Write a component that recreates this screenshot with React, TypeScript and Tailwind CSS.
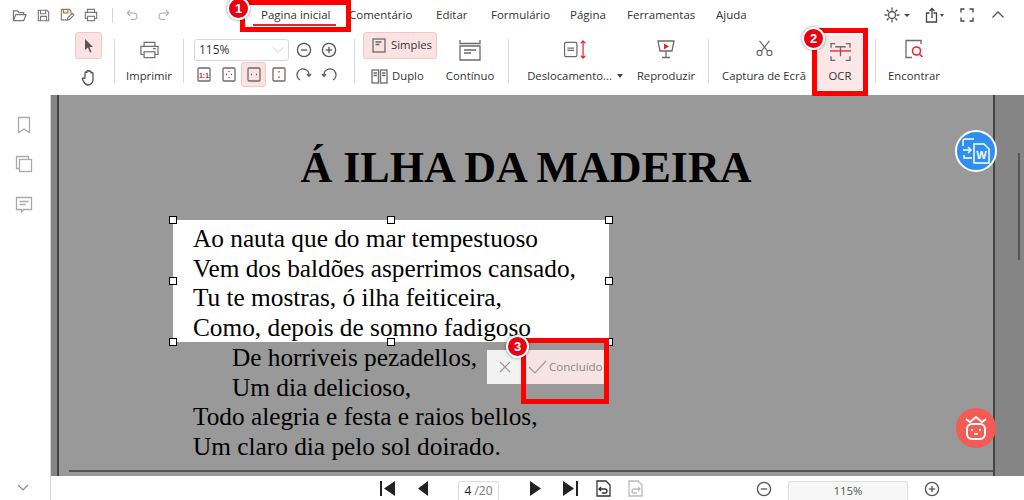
import React from "react";

const S = ({ w = 20, h = 20, vw, vh, children, className = "" }: { w?: number; h?: number; vw?: number; vh?: number; children: React.ReactNode; className?: string }) => (
  <svg width={w} height={h} viewBox={`0 0 ${vw ?? w} ${vh ?? h}`} fill="none" stroke="#6b6b6b" strokeWidth={1.3} className={"shrink-0 " + className}>{children}</svg>
);

const Sep = ({ h = "h-[44px]" }: { h?: string }) => <div className={`w-px ${h} bg-[#d9d9d9] shrink-0`} />;

const Badge = ({ n, className }: { n: number; className: string }) => (
  <div className={`absolute w-[23px] h-[23px] rounded-full bg-[#e60012] border-2 border-white text-white text-[13px] font-bold flex items-center justify-center shadow-[0_0_3px_rgba(0,0,0,0.5)] font-['Liberation_Sans',sans-serif] ${className}`}>{n}</div>
);

const RedBox = ({ className }: { className: string }) => <div className={`absolute border-[5px] border-[#ff0000] pointer-events-none ${className}`} />;

const Tab = ({ w, children, active }: { w: string; children: React.ReactNode; active?: boolean }) => (
  <div className={`${w} h-[30px] shrink-0 flex items-center`}>
    <span className={"-mt-[1px] " + (active ? "relative" : "")}>{children}{active && <span className="absolute left-[-8px] right-[-6px] top-[18px] h-[2px] bg-[#e8262d]" />}</span>
  </div>
);

const BigTool = ({ w, icon, label, extra }: { w: string; icon: React.ReactNode; label: string; extra?: React.ReactNode }) => (
  <div className={`${w} shrink-0 h-[65px] flex flex-col items-center text-[11.3px]`}>
    <div className="h-[37px] flex items-end justify-center pb-[8px]">{icon}</div>
    <div className="h-[20px] -mt-[1px] flex items-center whitespace-nowrap">{label}{extra}</div>
  </div>
);

const Mini = ({ active, children }: { active?: boolean; children: React.ReactNode }) => (
  <div className={`w-[25px] h-[25px] shrink-0 flex items-center justify-center rounded-[3px] ${active ? "bg-[#fbe3e3] border border-[#f7c5c5]" : ""}`}>{children}</div>
);

const Handle = ({ className }: { className: string }) => <div className={`absolute w-[8px] h-[8px] bg-white border border-black ${className}`} />;

const CirclePM = ({ plus }: { plus?: boolean }) => (
  <S w={16} h={16}><circle cx="8" cy="8" r="6.6" stroke="#555" /><path d="M4.8 8h6.4" stroke="#555" />{plus && <path d="M8 4.8v6.4" stroke="#555" />}</S>
);

const MiniPage = ({ children }: { children?: React.ReactNode }) => (
  <S w={14} h={15}><rect x="1" y="1" width="12" height="13" rx="1" />{children}</S>
);

export default function App() {
  return (
    <div className="w-[1024px] h-[500px] overflow-hidden relative bg-white flex flex-col text-[#333] text-[11.5px] font-['Open_Sans','Noto_Sans',sans-serif]">
      {/* title row */}
      <div className="h-[30px] flex items-center shrink-0">
        <div className="w-[261px] shrink-0 flex items-center pl-[12px]">
          <div className="w-[25px]"><S w={15} h={14} vw={16} vh={15}><path d="M1.5 13.5V3h4.500l1.500 2h5v2M1.500 13.500l2.500-6.500h11l-2.500 6.500z" stroke="#777" /></S></div>
          <div className="w-[23px]"><S w={13} h={13} vw={15} vh={15}><path d="M1.500 1.500h10l2 2v10h-12z" stroke="#777" /><path d="M4 1.500v4h6v-4M4 13.500v-5h7v5" stroke="#777" /></S></div>
          <div className="w-[24px]"><S w={15} h={14} vw={17} vh={16}><path d="M1.500 1.500h9l2 2v3M1.500 1.500v12h6" stroke="#a0744a" /><path d="M4 1.500v4h5v-4" stroke="#a0744a" /><path d="M8 14l1-3 5-5 2 2-5 5z" stroke="#777" /></S></div>
          <div className="w-[28px]"><S w={14} h={14} vw={16} vh={16}><path d="M4 5V1.500h8V5M4 12H1.500V5h13v7H12" stroke="#777" /><rect x="4" y="9.500" width="8" height="5" stroke="#777" /></S></div>
          <div className="w-[14px]"><div className="w-px h-[15px] bg-[#d5d5d5]" /></div>
          <div className="w-[31px]"><S w={13} h={14} vw={16} vh={16}><path d="M5 2L1.800 5.500 5 9" stroke="#aaa" /><path d="M2 5.500h7.500a4 4 0 0 1 0 8H6" stroke="#aaa" /></S></div>
          <div><S w={13} h={14} vw={16} vh={16}><path d="M11 2l3.200 3.500L11 9" stroke="#aaa" /><path d="M14 5.500H6.500a4 4 0 0 0 0 8H10" stroke="#aaa" /></S></div>
        </div>
        <Tab w="w-[88px]" active><span className="relative z-10">Pagina inicial</span></Tab>
        <Tab w="w-[87px]">Comentário</Tab>
        <Tab w="w-[55px]">Editar</Tab>
        <Tab w="w-[79px]">Formulário</Tab>
        <Tab w="w-[57px]">Página</Tab>
        <Tab w="w-[89px]">Ferramentas</Tab>
        <Tab w="w-[168px]">Ajuda</Tab>
        <div className="flex items-center">
          <div className="w-[41px] flex items-center gap-[4px]"><S w={16} h={16}><circle cx="8" cy="8" r="3.500" stroke="#555" /><path d="M8 0.500v3M8 12.500v3M0.500 8h3M12.500 8h3M2.700 2.700l2 2M11.300 11.300l2 2M13.300 2.700l-2 2M4.700 11.300l-2 2" stroke="#555" /></S><div className="w-0 h-0 border-x-[3px] border-x-transparent border-t-[3px] border-t-[#444]" /></div>
          <div className="w-[35px] flex items-center gap-[1px]"><S w={14} h={16}><path d="M4.500 6H1.500v9h10V6H8.500M7 11V1.500M4.500 4L7 1.500 9.500 4" stroke="#444" /></S><div className="w-0 h-0 border-x-[2.500px] border-x-transparent border-t-[3px] border-t-[#444]" /></div>
          <div className="w-[31px]"><S w={14} h={14}><path d="M1 4.500V1h3.500M9.500 1H13v3.500M13 9.500V13H9.500M4.500 13H1V9.500" stroke="#444" /></S></div>
          <div><S w={14} h={14}><path d="M1.500 9.500L7 4l5.500 5.500" stroke="#555" /></S></div>
        </div>
      </div>

      {/* ribbon */}
      <div className="h-[65px] shrink-0 flex items-start relative">
        <div className="w-[75px] shrink-0" />
        <div className="w-[27px] shrink-0 flex flex-col mt-[2px]">
          <div className="w-[27px] h-[27px] bg-[#fbe3e3] border border-[#f7c5c5] rounded-[3px] flex items-center justify-center">
            <svg width="12" height="16" viewBox="0 0 12 16"><path d="M2 1l8 8H6.500l2 5-1.500.6-2-5L2 12z" fill="#555" /></svg>
          </div>
          <div className="h-[36px] flex items-center justify-center pl-[1px]"><S w={16} h={17}><path d="M4 9V4a1 1 0 0 1 2 0V2.500a1 1 0 0 1 2 0V3a1 1 0 0 1 2 0v1.500a1 1 0 0 1 2 0V11a5 5 0 0 1-5 5c-3 0-3.500-2-5.500-5.500-.7-1.200.8-2 1.500-1z" stroke="#555" /></S></div>
        </div>
        <div className="w-[12px] shrink-0" />
        <div className="mt-[9px]"><Sep /></div>
        <BigTool w="w-[68px]" icon={<S w={21} h={18} vw={22} vh={20}><path d="M5 6V1.500h12V6M5 15H1.500V6h19v9H17" /><rect x="5" y="12" width="12" height="6.500" /><path d="M15 8.500h3" stroke="#e8262d" /></S>} label="Imprimir" />
        <div className="mt-[9px]"><Sep /></div>
        <div className="w-[170px] shrink-0 flex flex-col pl-[10px]">
          <div className="h-[35px] flex items-center pt-[5px]">
            <div className="w-[95px] h-[22px] border border-[#d9d9d9] rounded-[3px] flex items-center justify-between px-[4px] shrink-0 text-[12px]">
              <span>115%</span>
              <svg width="12" height="8" viewBox="0 0 12 8" fill="none" stroke="#ccc" strokeWidth="1"><path d="M1 1.500l5 5 5-5" /></svg>
            </div>
            <div className="w-[33px] pl-[7px]"><CirclePM /></div>
            <div className="-ml-[1px]"><CirclePM plus /></div>
          </div>
          <div className="flex items-center -ml-[3px] mt-[-3px] h-[25px]">
            <Mini><MiniPage><text x="7" y="10.500" fontSize="7" fill="#e8262d" stroke="none" textAnchor="middle" fontWeight="bold" fontFamily="Liberation Sans">1:1</text></MiniPage></Mini>
            <Mini><MiniPage><path d="M7 4v1M7 10v1M4 7.500h1M9 7.500h1" stroke="#e8262d" /></MiniPage></Mini>
            <Mini active><MiniPage><path d="M4 7.500h1M9 7.500h1" stroke="#e8262d" /></MiniPage></Mini>
            <Mini><MiniPage><path d="M7 4v1.500M7 9.500V11" stroke="#e8262d" /></MiniPage></Mini>
            <Mini><S w={16} h={15}><path d="M4 13A6 6 0 1 1 13 8.500" stroke="#555" /><path d="M11 7l2 2.200L15 7" stroke="#555" /></S></Mini>
            <Mini><S w={16} h={15}><path d="M12 13A6 6 0 1 0 3 8.500" stroke="#555" /><path d="M1 7l2 2.200L5 7" stroke="#555" /></S></Mini>
          </div>
        </div>
        <div className="mt-[9px]"><Sep /></div>
        <div className="w-[79px] shrink-0 pl-[8px] flex flex-col text-[11.3px]">
          <div className="w-[74px] h-[27px] mt-[2px] bg-[#fbe3e3] border border-[#f7c5c5] rounded-[3px] flex items-center gap-[5px] pl-[8px] shrink-0">
            <S w={14} h={15}><rect x="1" y="1" width="12" height="13" /><path d="M3.500 4h6M3.500 6.500h4" /></S><span>Simples</span>
          </div>
          <div className="h-[34px] flex items-center gap-[4px] pl-[8px]">
            <S w={17} h={15}><rect x="1" y="1" width="6.500" height="13" /><rect x="9.500" y="1" width="6.500" height="13" /><path d="M2.500 4h3.500M2.500 6.500h3.500M11 4h3.500M11 6.500h3.500" /></S><span>Duplo</span>
          </div>
        </div>
        <BigTool w="w-[72px]" icon={<S w={22} h={22} className="-mb-[2px]"><path d="M1 1v3.500h20V1M1 21V7h20v14z" /><path d="M5 11h12M5 14h7" /></S>} label="Contínuo" />
        <div className="w-[2px] shrink-0" />
        <div className="mt-[9px]"><Sep /></div>
        <BigTool w="w-[132px]" icon={<S w={24} h={19} vw={24} vh={20}><rect x="1" y="2.500" width="13" height="15" rx="1.500" /><path d="M4 8.500h7M4 11h7" /><path d="M20.500 1v18M18 3.500l2.500-2.500 2.500 2.500M18 16.500l2.500 2.500 2.500-2.500" stroke="#e8262d" /></S>} label="Deslocamento..." extra={<span className="inline-block ml-[5px] w-0 h-0 border-x-[3.500px] border-x-transparent border-t-[4px] border-t-[#444]" />} />
        <BigTool w="w-[50px]" icon={<S w={20} h={20}><path d="M2 2h16l-2 10H4z" /><path d="M10 12v6M6 18.500h8" /><path d="M8 4.500l5 3-5 3z" fill="#e8262d" stroke="none" /></S>} label="Reproduzir" />
        <div className="w-[17px] shrink-0" />
        <div className="mt-[9px]"><Sep /></div>
        <div className="w-[13px] shrink-0" />
        <BigTool w="w-[84px]" icon={<S w={19} h={18} vw={20} vh={20} className="mb-[2px]"><circle cx="4.500" cy="15.500" r="2.800" /><circle cx="15.500" cy="15.500" r="2.800" /><path d="M6.500 13.500L15.500 2M13.500 13.500L4.500 2" /></S>} label="Captura de Ecrã" />
        <div className="w-[6px] shrink-0" />
        <div className="w-[56px] shrink-0 h-[65px] p-[5px] flex text-[11.3px]">
          <div className="flex-1 bg-[#fbe7e7] flex flex-col items-center">
            <div className="h-[32px] flex items-end justify-center pb-[5px]"><S w={21} h={20} vw={20} vh={18}><path d="M1 5V1h4M15 1h4v4M19 13v4h-4M5 17H1v-4" /><path d="M5 4h10M10 4v9" /><path d="M0 8h20" stroke="#e8262d" /></S></div>
            <div className="h-[20px] -mt-[1px] flex items-center">OCR</div>
          </div>
        </div>
        <div className="w-[7px] shrink-0" />
        <div className="mt-[9px]"><Sep /></div>
        <BigTool w="w-[76px]" icon={<S w={20} h={20}><path d="M17 5V1.500H2v17h6" /><circle cx="12.500" cy="12" r="4" stroke="#e8262d" strokeWidth="1.600" /><path d="M15.500 15l3 3" stroke="#e8262d" strokeWidth="1.600" /></S>} label="Encontrar" />
      </div>

      {/* body */}
      <div className="flex-1 flex min-h-0">
        <div className="w-[51px] shrink-0 border-r border-[#d4d4d4] flex flex-col items-center pt-[21px] pr-[3px]">
          <S w={14} h={18}><path d="M1.500 1.500h11v15l-5.500-3.500-5.500 3.500z" stroke="#aaa" /></S>
          <div className="mt-[21px]"><S w={18} h={18}><path d="M4 13.500H1.500v-12h12V4" stroke="#aaa" /><rect x="4.500" y="4.500" width="12" height="12" stroke="#aaa" /></S></div>
          <div className="mt-[23px]"><S w={18} h={17}><path d="M1.500 1.500h15v12h-8l-2 2.500v-2.500h-5z" stroke="#aaa" /><path d="M4.500 5.500h9M4.500 8.500h6" stroke="#aaa" /></S></div>
        </div>
        <div className="flex-1 flex bg-[#858585] relative min-w-0">
          <div className="w-[6px] shrink-0" />
          <div className="w-[938px] shrink-0 h-full bg-[#999999] border-x-2 border-[#444] overflow-hidden flex flex-col relative font-['Liberation_Serif',serif] text-black">
            <div className="text-center font-bold text-[44px] leading-[52px] mt-[47px] whitespace-nowrap">Á ILHA DA MADEIRA</div>
            <div className="relative ml-[114px] w-[436px] h-[122px] mt-[26px] bg-white pl-[20px] pt-[4px] text-[25.3px] leading-[29.600px] shrink-0">
              <div className="whitespace-nowrap">Ao nauta que do mar tempestuoso</div>
              <div className="whitespace-nowrap">Vem dos baldões asperrimos cansado,</div>
              <div className="whitespace-nowrap">Tu te mostras, ó ilha feiticeira,</div>
              <div className="whitespace-nowrap">Como, depois de somno fadigoso</div>
              <Handle className="-left-[4px] -top-[4px]" /><Handle className="left-[214px] -top-[4px]" /><Handle className="-right-[4px] -top-[4px]" />
              <Handle className="-left-[4px] top-[57px]" /><Handle className="-right-[4px] top-[57px]" />
              <Handle className="-left-[4px] -bottom-[4px]" /><Handle className="left-[214px] -bottom-[4px]" /><Handle className="-right-[4px] -bottom-[4px]" />
            </div>
            <div className="ml-[134px] text-[25.3px] leading-[29.600px] pt-[1px] whitespace-nowrap">
              <div className="pl-[39px]">De horriveis pezadellos,</div>
              <div className="pl-[39px]">Um dia delicioso,</div>
              <div>Todo alegria e festa e raios bellos,</div>
              <div>Um claro dia pelo sol doirado.</div>
            </div>
            <div className="absolute left-[10px] right-0 top-[375px] h-[2px] bg-[#555]" />
            <div className="absolute left-[428px] top-[255px] h-[34px] flex font-['Open_Sans',sans-serif] text-[11.5px] text-[#888]">
              <div className="w-[36px] bg-[#f2f2f2] flex items-center justify-center">
                <svg width="12" height="12" viewBox="0 0 12 12" fill="none" stroke="#999" strokeWidth="1.200"><path d="M1 1l10 10M11 1L1 11" /></svg>
              </div>
              <div className="w-[81px] bg-[#f6e3e3] flex items-center pl-[5px] gap-[2px]">
                <svg width="19" height="14" viewBox="0 0 19 14" fill="none" stroke="#999" strokeWidth="1.200"><path d="M1 7l6 6L18 1" /></svg>
                <span>Concluído</span>
              </div>
            </div>
          </div>
          <div className="absolute right-[4px] top-[58px] w-[2px] h-[107px] bg-[#555]" />
        </div>
      </div>

      {/* status */}
      <div className="h-[24px] shrink-0 flex items-center relative">
        <div className="w-[51px] h-full shrink-0 border-r border-[#d4d4d4] flex items-center justify-center pr-[5px] pb-[2px]">
          <svg width="12" height="7" viewBox="0 0 12 7" fill="none" stroke="#888" strokeWidth="1.200"><path d="M1 1l5 5 5-5" /></svg>
        </div>
        <div className="w-[329px] shrink-0" />
        <div className="flex items-center h-full">
          <div className="w-[36px]"><svg width="16" height="15" viewBox="0 0 16 15"><path d="M0 0h2v15H0zM15 0v15L4 7.500z" fill="#222" /></svg></div>
          <div className="w-[42px] pl-[1px]"><svg width="11" height="15" viewBox="0 0 11 15"><path d="M11 0v15L1 7.500z" fill="#222" /></svg></div>
          <div className="w-[41px] h-[19px] mt-[5px] border border-b-0 border-[#ddd] rounded-t-[3px] flex items-center justify-center text-[12px] text-[#777]"><span className="text-[#222]">4</span>&nbsp;/20</div>
          <div className="w-[31px]" />
          <div className="w-[32px]"><svg width="11" height="15" viewBox="0 0 11 15"><path d="M0 0v15L11 7.500z" fill="#222" /></svg></div>
          <div className="w-[34px]"><svg width="16" height="15" viewBox="0 0 16 15"><path d="M14 0h2v15h-2zM1 0v15L12 7.500z" fill="#222" /></svg></div>
          <div className="w-[32px]"><S w={15} h={17}><path d="M1 1h9l4 4v11H1z" stroke="#333" /><path d="M5 7l-2 2 2 2M3 9h6a2 2 0 0 1 0 4H6" stroke="#333" /></S></div>
          <div className="w-[128px]"><S w={15} h={17}><path d="M1 1h9l4 4v11H1z" stroke="#bbb" /><path d="M10 7l2 2-2 2M12 9H6a2 2 0 0 0 0 4h3" stroke="#bbb" /></S></div>
        </div>
        <div className="w-[32px] shrink-0 mt-[1px]"><CirclePM /></div>
        <div className="w-[120px] h-[19px] mt-[5px] shrink-0 bg-[#f7f7f7] border border-b-0 border-[#ddd] rounded-t-[3px] flex items-center justify-center text-[11.500px] text-[#555]">115%</div>
        <div className="pl-[16px] mt-[1px]"><CirclePM plus /></div>
      </div>

      {/* annotation overlays */}
      <RedBox className="left-[240px] top-0 w-[111px] h-[32px]" />
      <Badge n={1} className="left-[227px] -top-[3px]" />
      <RedBox className="left-[812px] top-[28px] w-[56px] h-[68px]" />
      <Badge n={2} className="left-[802px] top-[27px]" />
      <RedBox className="left-[521px] top-[338px] w-[88px] h-[66px]" />
      <Badge n={3} className="left-[506px] top-[335px]" />

      <div className="absolute left-[955px] top-[130px] w-[42px] h-[42px] rounded-full bg-[#2f8ff0] border-2 border-white flex items-center justify-center">
        <svg width="30" height="28" viewBox="0 0 30 28" fill="none" stroke="#fff" strokeWidth="1.500">
          <path d="M2 9V4a2 2 0 0 1 2-2h9M2 13h8M7 10l3 3-3 3M3 18v3h8" />
          <path d="M13 7h10l5 5v14H13z" fill="#2f8ff0" />
          <text x="20.500" y="22" fontSize="11" fontWeight="bold" fill="#fff" stroke="none" textAnchor="middle" fontFamily="Liberation Sans">W</text>
        </svg>
      </div>
      <div className="absolute left-[956px] top-[408px] w-[40px] h-[40px] rounded-full bg-[#f25c54] flex items-center justify-center">
        <svg width="26" height="28" viewBox="0 0 26 28" fill="none" stroke="#fff" strokeWidth="2">
          <path d="M3 5l4 3 6-5 6 5 4-3" strokeWidth="1.800" />
          <rect x="4" y="10" width="18" height="15" rx="5" />
          <path d="M9 15v2M17 15v2M11 20h4" strokeWidth="1.600" />
        </svg>
      </div>
    </div>
  );
}
